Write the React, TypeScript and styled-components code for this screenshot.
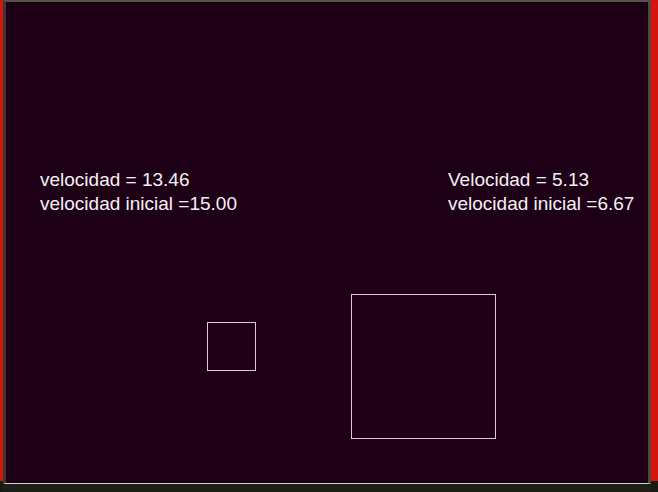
import React from 'react';
import styled, { createGlobalStyle } from 'styled-components';

const GlobalStyle = createGlobalStyle`
  html, body {
    margin: 0;
    padding: 0;
    width: 658px;
    height: 492px;
    overflow: hidden;
    background: #1a1a14;
  }
`;

const Frame = styled.div`
  width: 658px;
  height: 492px;
  display: flex;
  flex-direction: row;
  box-sizing: border-box;
`;

const RedEdge = styled.div<{ $width: number }>`
  width: ${({ $width }) => $width}px;
  height: 481px;
  background: #d8140f;
  flex-shrink: 0;
`;

const Middle = styled.div`
  flex: 1;
  display: flex;
  flex-direction: column;
`;

const Canvas = styled.div`
  position: relative;
  flex: 1;
  background: #1d0016;
  border-top: 2px solid #55554c;
  border-left: 3px solid #3a3a32;
  border-right: 3px solid #4a4a42;
  border-bottom: 1px solid #c8e0c0;
  font-family: 'Liberation Sans', Arial, sans-serif;
  color: #f4f0f2;
`;

const Bottom = styled.div`
  height: 8px;
  background: #1c1f18;
`;

const Readout = styled.div<{ $x: number; $y: number }>`
  position: absolute;
  left: ${({ $x }) => $x}px;
  top: ${({ $y }) => $y}px;
  font-size: 19px;
  line-height: 24px;
  letter-spacing: 0;
  white-space: pre;
`;

const Square = styled.div<{ $x: number; $y: number; $size: number }>`
  position: absolute;
  left: ${({ $x }) => $x}px;
  top: ${({ $y }) => $y}px;
  width: ${({ $size }) => $size}px;
  height: ${({ $size }) => $size}px;
  box-sizing: border-box;
  border: 1px solid #e4c4d6;
`;

export default function App() {
  return (
    <>
      <GlobalStyle />
      <Frame>
        <RedEdge $width={3} />
        <Middle>
          <Canvas>
            <Readout $x={34} $y={166}>
              {'velocidad = 13.46\nvelocidad inicial =15.00'}
            </Readout>
            <Readout $x={442} $y={166}>
              {'Velocidad = 5.13\nvelocidad inicial =6.67'}
            </Readout>
            <Square $x={201} $y={320} $size={49} />
            <Square $x={345} $y={292} $size={145} />
          </Canvas>
          <Bottom />
        </Middle>
        <RedEdge $width={7} />
      </Frame>
    </>
  );
}
